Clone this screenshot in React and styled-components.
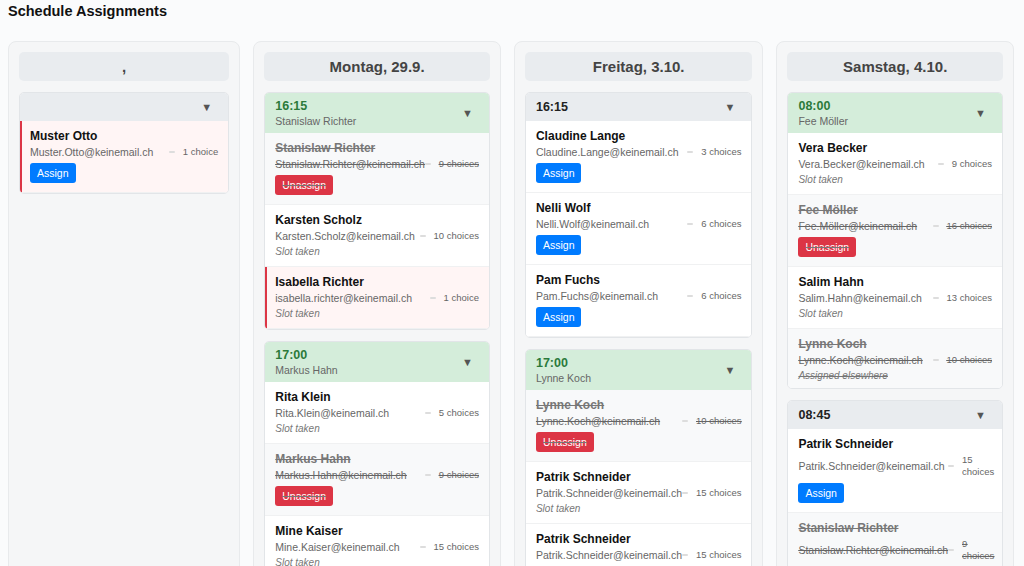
import React from "react";
import styled, { createGlobalStyle } from "styled-components";

const Global = createGlobalStyle`
  body { margin: 0; background: #fafbfc; font-family: "Liberation Sans", Arial, sans-serif; color: #222; }
`;

const days = [
  {
    title: ",",
    slots: [
      { time: "", person: "", color: "gray", rows: [
        { name: "Muster Otto", email: "Muster.Otto@keinemail.ch", choices: "1 choice", flag: true, action: "assign" },
      ] },
    ],
  },
  {
    title: "Montag, 29.9.",
    slots: [
      { time: "16:15", person: "Stanislaw Richter", color: "green", rows: [
        { name: "Stanislaw Richter", email: "Stanislaw.Richter@keinemail.ch", choices: "9 choices", done: true, action: "unassign" },
        { name: "Karsten Scholz", email: "Karsten.Scholz@keinemail.ch", choices: "10 choices", note: "Slot taken" },
        { name: "Isabella Richter", email: "isabella.richter@keinemail.ch", choices: "1 choice", flag: true, note: "Slot taken" },
      ] },
      { time: "17:00", person: "Markus Hahn", color: "green", scroll: true, rows: [
        { name: "Rita Klein", email: "Rita.Klein@keinemail.ch", choices: "5 choices", note: "Slot taken" },
        { name: "Markus Hahn", email: "Markus.Hahn@keinemail.ch", choices: "9 choices", done: true, action: "unassign" },
        { name: "Mine Kaiser", email: "Mine.Kaiser@keinemail.ch", choices: "15 choices", note: "Slot taken" },
        { name: "Gloria Neumann", email: "Gloria.Neumann@keinemail.ch", choices: "15 choices", wrap: true, note: "Slot taken" },
      ] },
    ],
  },
  {
    title: "Freitag, 3.10.",
    slots: [
      { time: "16:15", person: "", color: "gray", rows: [
        { name: "Claudine Lange", email: "Claudine.Lange@keinemail.ch", choices: "3 choices", action: "assign" },
        { name: "Nelli Wolf", email: "Nelli.Wolf@keinemail.ch", choices: "6 choices", action: "assign" },
        { name: "Pam Fuchs", email: "Pam.Fuchs@keinemail.ch", choices: "6 choices", action: "assign" },
      ] },
      { time: "17:00", person: "Lynne Koch", color: "green", rows: [
        { name: "Lynne Koch", email: "Lynne.Koch@keinemail.ch", choices: "10 choices", done: true, action: "unassign" },
        { name: "Patrik Schneider", email: "Patrik.Schneider@keinemail.ch", choices: "15 choices", note: "Slot taken" },
        { name: "Patrik Schneider", email: "Patrik.Schneider@keinemail.ch", choices: "15 choices", note: "Slot taken" },
      ] },
      { time: "17:45", person: "", color: "gray", rows: [
        { name: "Rita Klein", email: "Rita.Klein@keinemail.ch", choices: "5 choices", action: "assign" },
      ] },
    ],
  },
  {
    title: "Samstag, 4.10.",
    slots: [
      { time: "08:00", person: "Fee Möller", color: "green", scroll: true, rows: [
        { name: "Vera Becker", email: "Vera.Becker@keinemail.ch", choices: "9 choices", note: "Slot taken" },
        { name: "Fee Möller", email: "Fee.Möller@keinemail.ch", choices: "16 choices", done: true, action: "unassign" },
        { name: "Salim Hahn", email: "Salim.Hahn@keinemail.ch", choices: "13 choices", note: "Slot taken" },
        { name: "Lynne Koch", email: "Lynne.Koch@keinemail.ch", choices: "10 choices", done: true, note: "Assigned elsewhere" },
        { name: "Patrik Schneider", email: "Patrik.Schneider@keinemail.ch", choices: "15 choices", wrap: true, note: "Slot taken" },
      ] },
      { time: "08:45", person: "", color: "gray", scroll: true, rows: [
        { name: "Patrik Schneider", email: "Patrik.Schneider@keinemail.ch", choices: "15 choices", wrap: true, action: "assign" },
        { name: "Stanislaw Richter", email: "Stanislaw.Richter@keinemail.ch", choices: "9 choices", wrap: true, done: true, note: "Assigned elsewhere" },
      ] },
    ],
  },
];

const Page = styled.div`
  padding: 3px 8px 0;
`;

const Title = styled.h1`
  font-size: 14.5px;
  font-weight: bold;
  margin: 0 0 22px;
  color: #111;
`;

const Board = styled.div`
  display: grid;
  grid-template-columns: repeat(4, 1fr);
  gap: 13px;
  padding-right: 2px;
`;

const Column = styled.div`
  background: #f5f6f7;
  border: 1px solid #e8eaec;
  border-radius: 8px;
  padding: 10px 10px;
  min-height: 560px;
  display: flex;
  flex-direction: column;
  gap: 11px;
`;

const DayHeader = styled.div`
  background: #e9ecef;
  border-radius: 5px;
  height: 29px;
  display: flex;
  align-items: center;
  justify-content: center;
  font-size: 15px;
  font-weight: bold;
  color: #444;
`;

const Slot = styled.div`
  background: #fff;
  border: 1px solid #e2e5e8;
  border-radius: 5px;
  overflow: hidden;
`;

const SlotHead = styled.div`
  background: ${p => (p.$green ? "#d4edda" : "#e9ecef")};
  min-height: 28px;
  padding: 6px 10px;
  box-sizing: border-box;
  display: flex;
  align-items: center;
  justify-content: space-between;
`;

const Time = styled.div`
  font-size: 12.5px;
  font-weight: bold;
  color: ${p => (p.$green ? "#2b7a3a" : "#222")};
`;

const Person = styled.div`
  font-size: 10.5px;
  color: #666;
  margin-top: 2px;
`;

const Caret = styled.span`
  font-size: 11px;
  color: #555;
  margin-right: 6px;
`;

const List = styled.div`
  max-height: ${p => (p.$scroll ? "255px" : "none")};
  overflow-y: ${p => (p.$scroll ? "scroll" : "visible")};
  &::-webkit-scrollbar { width: 8px; }
  &::-webkit-scrollbar-track { background: #fff; }
  &::-webkit-scrollbar-thumb { background: #cfd6de; border-radius: 4px; }
`;

const Row = styled.div`
  padding: 8px 10px 9px ${p => (p.$flag ? "8px" : "10px")};
  border-left: ${p => (p.$flag ? "2px solid #dc3545" : "none")};
  background: ${p => (p.$flag ? "#fff5f5" : p.$done ? "#f8f9fa" : "#fff")};
  border-bottom: 1px solid #f0f1f2;
  text-decoration: ${p => (p.$done ? "line-through" : "none")};
  color: ${p => (p.$done ? "#777" : "#111")};
`;

const Name = styled.div`
  font-size: 12px;
  font-weight: bold;
`;

const Line = styled.div`
  display: flex;
  align-items: center;
  justify-content: space-between;
  margin-top: 3px;
  font-size: 10.5px;
  color: #666;
  text-decoration: inherit;
`;

const Choices = styled.span`
  display: flex;
  align-items: center;
  gap: 8px;
  font-size: 9.5px;
  line-height: 1.25;
  white-space: ${p => (p.$wrap ? "normal" : "nowrap")};
  width: ${p => (p.$wrap ? "44px" : "auto")};
  text-decoration: inherit;
  &::before {
    content: "";
    width: 6px;
    height: 2px;
    border-radius: 1px;
    background: #ddd;
    flex: none;
  }
`;

const Note = styled.div`
  font-size: 10px;
  font-style: italic;
  color: #777;
  margin-top: 4px;
`;

const Btn = styled.button`
  display: block;
  margin-top: 5px;
  border: none;
  border-radius: 3px;
  padding: 4px 7px;
  font-size: 10.5px;
  font-family: inherit;
  color: #fff;
  background: ${p => (p.$red ? "#dc3545" : "#007bff")};
`;

export default function App() {
  return (
    <Page>
      <Global />
      <Title>Schedule Assignments</Title>
      <Board>
        {days.map((d, i) => (
          <Column key={i}>
            <DayHeader>{d.title}</DayHeader>
            {d.slots.map((s, j) => (
              <Slot key={j}>
                <SlotHead $green={s.color === "green"}>
                  <div>
                    {s.time && <Time $green={s.color === "green"}>{s.time}</Time>}
                    {s.person && <Person>{s.person}</Person>}
                  </div>
                  <Caret>▼</Caret>
                </SlotHead>
                <List $scroll={s.scroll}>
                  {s.rows.map((r, k) => (
                    <Row key={k} $flag={r.flag} $done={r.done}>
                      <Name>{r.name}</Name>
                      <Line>
                        <span>{r.email}</span>
                        <Choices $wrap={r.wrap}>{r.choices}</Choices>
                      </Line>
                      {r.note && <Note>{r.note}</Note>}
                      {r.action === "assign" && <Btn>Assign</Btn>}
                      {r.action === "unassign" && <Btn $red>Unassign</Btn>}
                    </Row>
                  ))}
                </List>
              </Slot>
            ))}
          </Column>
        ))}
      </Board>
    </Page>
  );
}
